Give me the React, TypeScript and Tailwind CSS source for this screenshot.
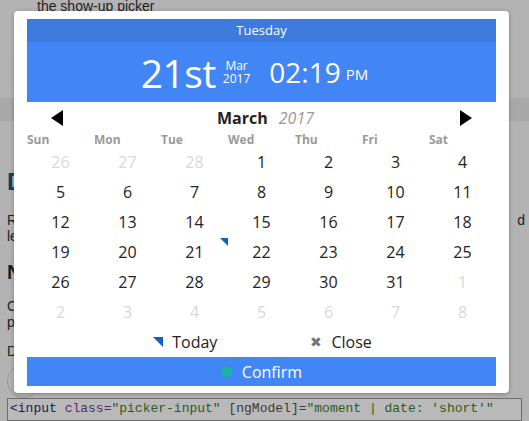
import React from "react";

const weekdays = ["Sun", "Mon", "Tue", "Wed", "Thu", "Fri", "Sat"];

type Day = { n: number; muted?: boolean; today?: boolean };

const weeks: Day[][] = [
  [{ n: 26, muted: true }, { n: 27, muted: true }, { n: 28, muted: true }, { n: 1 }, { n: 2 }, { n: 3 }, { n: 4 }],
  [{ n: 5 }, { n: 6 }, { n: 7 }, { n: 8 }, { n: 9 }, { n: 10 }, { n: 11 }],
  [{ n: 12 }, { n: 13 }, { n: 14 }, { n: 15 }, { n: 16 }, { n: 17 }, { n: 18 }],
  [{ n: 19 }, { n: 20 }, { n: 21, today: true }, { n: 22 }, { n: 23 }, { n: 24 }, { n: 25 }],
  [{ n: 26 }, { n: 27 }, { n: 28 }, { n: 29 }, { n: 30 }, { n: 31 }, { n: 1, muted: true }],
  [{ n: 2, muted: true }, { n: 3, muted: true }, { n: 4, muted: true }, { n: 5, muted: true }, { n: 6, muted: true }, { n: 7, muted: true }, { n: 8, muted: true }],
];

function Corner({ size }: { size: number }) {
  return (
    <svg width={size} height={size} viewBox="0 0 10 10" aria-hidden>
      <polygon points="0,0 10,0 10,10" fill="#0f5fc8" />
    </svg>
  );
}

function Arrow({ dir }: { dir: "left" | "right" }) {
  return (
    <svg width="12" height="16" viewBox="0 0 12 16" aria-hidden>
      {dir === "left" ? (
        <polygon points="12,0 12,16 0,8" fill="#000" />
      ) : (
        <polygon points="0,0 0,16 12,8" fill="#000" />
      )}
    </svg>
  );
}

function BackgroundPage() {
  return (
    <div className="flex h-full flex-col font-['Liberation_Sans',sans-serif] text-[#1e1e1e]">
      <div className="h-[101px] pl-[37px] text-[14px] leading-[12px]">the show-up picker</div>
      <div className="h-[23px] bg-[#a9a9a9]" />
      <div className="flex flex-1 flex-col pl-[7px]">
        <div className="mt-[49px] h-[24px] text-[24px] font-bold leading-none text-[#173b63]">D</div>
        <div className="mt-[18px] flex justify-between pr-[4px] text-[14px] leading-[16px]">
          <span>R</span>
          <span>d</span>
        </div>
        <div className="text-[14px] leading-[16px]">le</div>
        <div className="mt-[18px] text-[20px] font-bold leading-none">N</div>
        <div className="mt-[16px] text-[14px] leading-[16px]">C</div>
        <div className="text-[14px] leading-[16px]">p</div>
        <div className="mt-[13px] text-[14px] leading-[16px]">D</div>
        <div className="mt-[5px] h-[34px] w-[34px] rounded-full border border-[#9a9a9a]" />
      </div>
      <div className="mx-[7px] h-[24px] border border-[#6e6e6e] bg-[#b9b9b9] px-[2px] pt-[3px] font-['Liberation_Mono',monospace] text-[13px] leading-none whitespace-nowrap overflow-hidden">
        <span className="text-[#1a1a5e]">&lt;input</span>{" "}
        <span className="text-[#5a2a6a]">class=</span>
        <span className="text-[#2d5a1e]">"picker-input"</span>{" "}
        <span className="text-[#3a3a3a]">[ngModel]=</span>
        <span className="text-[#2d5a1e]">"moment | date: 'short'"</span>
      </div>
    </div>
  );
}

function Picker() {
  return (
    <div className="absolute left-[14px] top-[11px] w-[495px] rounded-[4px] bg-white px-[13px] pt-[8px] pb-[7px] font-['Open_Sans',sans-serif] shadow-[0_1px_4px_rgba(0,0,0,0.3)]">
      <div className="flex h-[23px] items-center justify-center bg-[#3c7bdd] text-[13px] text-white">Tuesday</div>
      <div className="flex h-[60px] items-center justify-center bg-[#4285f4] pr-[14px] text-white">
        <span className="text-[39px] leading-none tracking-[-0.5px]">21st</span>
        <span className="ml-[7px] flex flex-col items-center text-[12px] leading-[13px]">
          <span>Mar</span>
          <span>2017</span>
        </span>
        <span className="ml-[19px] text-[28px] leading-none">02:19</span>
        <span className="ml-[5px] mt-[4px] text-[15px] leading-none">PM</span>
      </div>

      <div className="flex h-[31px] items-center justify-between px-[24px]">
        <Arrow dir="left" />
        <div className="flex items-baseline gap-[11px] pl-[8px] text-[16px]">
          <span className="font-bold text-[#222]">March</span>
          <span className="italic text-[#999]">2017</span>
        </div>
        <Arrow dir="right" />
      </div>

      <div className="grid grid-cols-7">
        {weekdays.map((d) => (
          <div key={d} className="h-[14px] text-[12px] font-bold leading-[14px] text-[#9a9a9a]">
            {d}
          </div>
        ))}
        {weeks.flat().map((day, i) => (
          <div
            key={i}
            className={`relative flex h-[30px] items-center justify-center text-[16px] ${
              day.muted ? "text-[#d8d8d8]" : "text-[#222]"
            }`}
          >
            {day.n}
            {day.today && (
              <span className="absolute right-[0px] top-[1px] flex">
                <Corner size={8} />
              </span>
            )}
          </div>
        ))}
      </div>

      <div className="flex h-[30px] items-center justify-center gap-[93px] pl-[2px] text-[16px] text-[#222]">
        <div className="flex items-center gap-[9px]">
          <Corner size={10} />
          <span>Today</span>
        </div>
        <div className="flex items-center gap-[9px]">
          <span className="text-[14px] leading-none text-[#777]">✖</span>
          <span>Close</span>
        </div>
      </div>

      <div className="flex h-[29px] items-center justify-center gap-[10px] bg-[#4285f4] text-[16px] text-white">
        <span className="h-[11px] w-[11px] rounded-full bg-[#17b3a3]" />
        <span>Confirm</span>
      </div>
    </div>
  );
}

export default function App() {
  return (
    <div className="relative h-[421px] w-[529px] overflow-hidden bg-[#b3b3b3]">
      <BackgroundPage />
      <Picker />
    </div>
  );
}
